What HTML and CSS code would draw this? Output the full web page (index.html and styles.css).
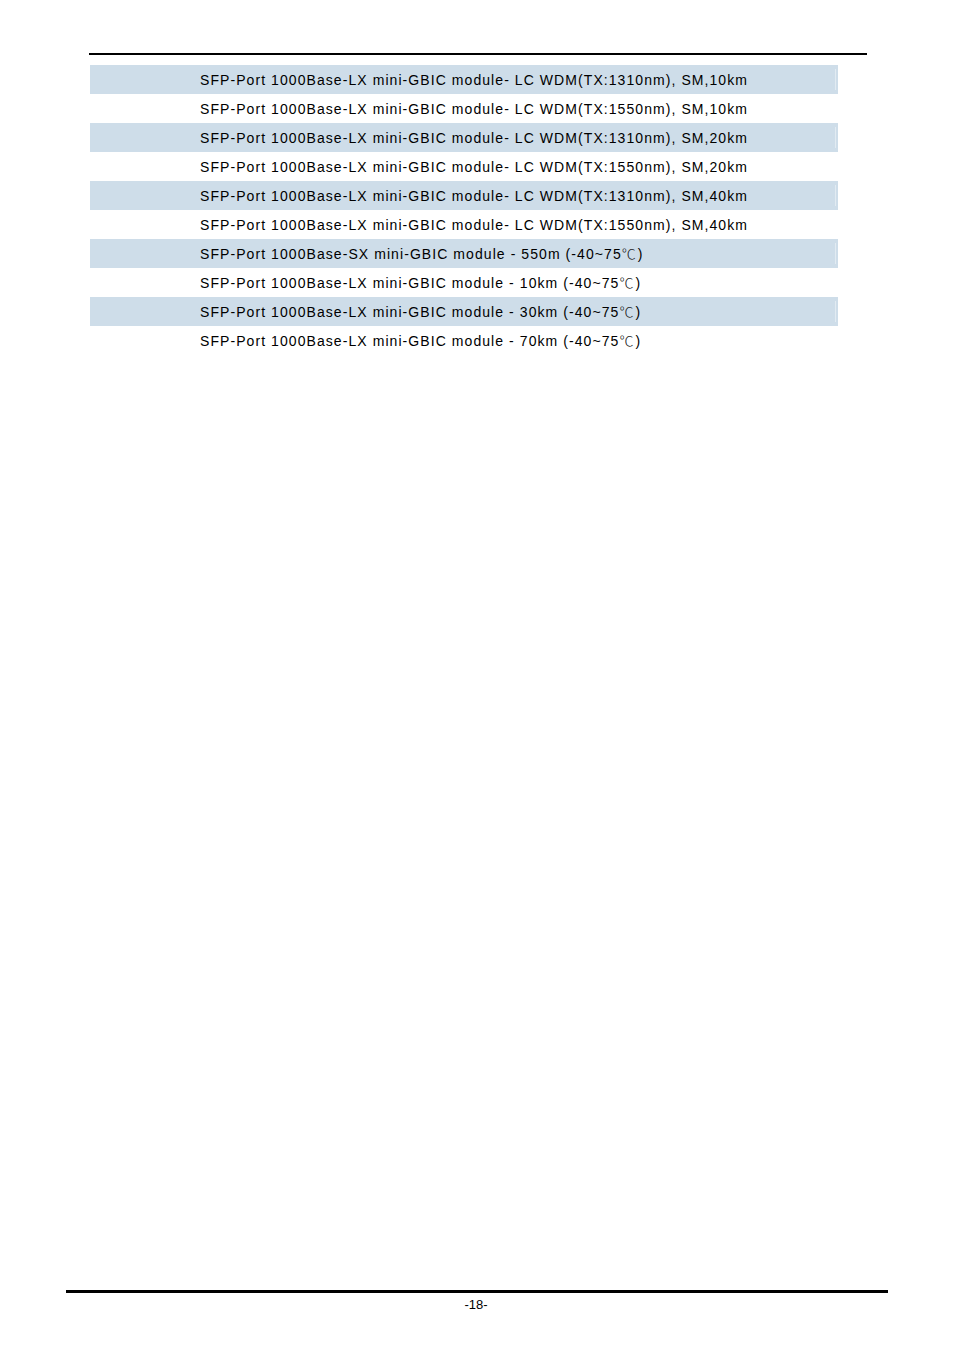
FILE: index.html
```html
<!DOCTYPE html>
<html>
<head>
<meta charset="utf-8">
<link rel="stylesheet" href="styles.css">
</head>
<body>
<div class="page">
  <div class="header-rule"></div>
  <div class="list">
    <div class="row shaded"><span class="spacer"></span><span class="text">SFP-Port 1000Base-LX mini-GBIC module- LC WDM(TX:1310nm), SM,10km</span><span class="edge"></span></div>
    <div class="row"><span class="spacer"></span><span class="text">SFP-Port 1000Base-LX mini-GBIC module- LC WDM(TX:1550nm), SM,10km</span><span class="edge"></span></div>
    <div class="row shaded"><span class="spacer"></span><span class="text">SFP-Port 1000Base-LX mini-GBIC module- LC WDM(TX:1310nm), SM,20km</span><span class="edge"></span></div>
    <div class="row"><span class="spacer"></span><span class="text">SFP-Port 1000Base-LX mini-GBIC module- LC WDM(TX:1550nm), SM,20km</span><span class="edge"></span></div>
    <div class="row shaded"><span class="spacer"></span><span class="text">SFP-Port 1000Base-LX mini-GBIC module- LC WDM(TX:1310nm), SM,40km</span><span class="edge"></span></div>
    <div class="row"><span class="spacer"></span><span class="text">SFP-Port 1000Base-LX mini-GBIC module- LC WDM(TX:1550nm), SM,40km</span><span class="edge"></span></div>
    <div class="row shaded"><span class="spacer"></span><span class="text">SFP-Port 1000Base-SX mini-GBIC module - 550m (-40~75<span class="deg">℃</span>)</span><span class="edge"></span></div>
    <div class="row"><span class="spacer"></span><span class="text">SFP-Port 1000Base-LX mini-GBIC module - 10km (-40~75<span class="deg">℃</span>)</span><span class="edge"></span></div>
    <div class="row shaded"><span class="spacer"></span><span class="text">SFP-Port 1000Base-LX mini-GBIC module - 30km (-40~75<span class="deg">℃</span>)</span><span class="edge"></span></div>
    <div class="row"><span class="spacer"></span><span class="text">SFP-Port 1000Base-LX mini-GBIC module - 70km (-40~75<span class="deg">℃</span>)</span><span class="edge"></span></div>
  </div>
</div>
<div class="footer">
  <div class="footer-rule"></div>
  <div class="page-num">-18-</div>
</div>
</body>
</html>
```

FILE: styles.css
```css
html, body {
  margin: 0;
  padding: 0;
  background: #ffffff;
}
body {
  width: 954px;
  height: 1350px;
  position: relative;
  font-family: "Liberation Sans", Arial, sans-serif;
  color: #000;
}
.page {
  padding-top: 53px;
  margin-left: 89px;
  width: 778px;
}
.header-rule {
  height: 2px;
  background: #000;
}
.list {
  margin-top: 10px;
  margin-left: 1px;
  width: 748px;
  display: flex;
  flex-direction: column;
}
.row {
  height: 29px;
  display: flex;
  align-items: center;
}
.row.shaded {
  background: #cedde9;
}
.spacer {
  width: 110px;
  flex: none;
}
.text {
  flex: 1;
  font-size: 14px;
  letter-spacing: 1.07px;
  white-space: nowrap;
  line-height: 29px;
  padding-top: 2px;
}
.deg {
  display: inline-block;
  width: 16px;
  font-family: "Noto Sans CJK JP", "Noto Sans CJK SC", sans-serif;
  font-size: 14px;
  font-weight: 300;
  letter-spacing: 0;
  color: #222;
  line-height: 14px;
}
.edge {
  width: 3px;
  flex: none;
  align-self: stretch;
  margin: 4px 0;
}
.row.shaded .edge {
  border-left: 1px solid #e2ebf2;
  width: 2px;
}
.footer {
  position: absolute;
  top: 1290px;
  left: 66px;
  width: 822px;
}
.footer-rule {
  height: 3px;
  background: #000;
}
.page-num {
  text-align: center;
  font-size: 13px;
  margin-top: 4px;
  padding-right: 2px;
}
```
